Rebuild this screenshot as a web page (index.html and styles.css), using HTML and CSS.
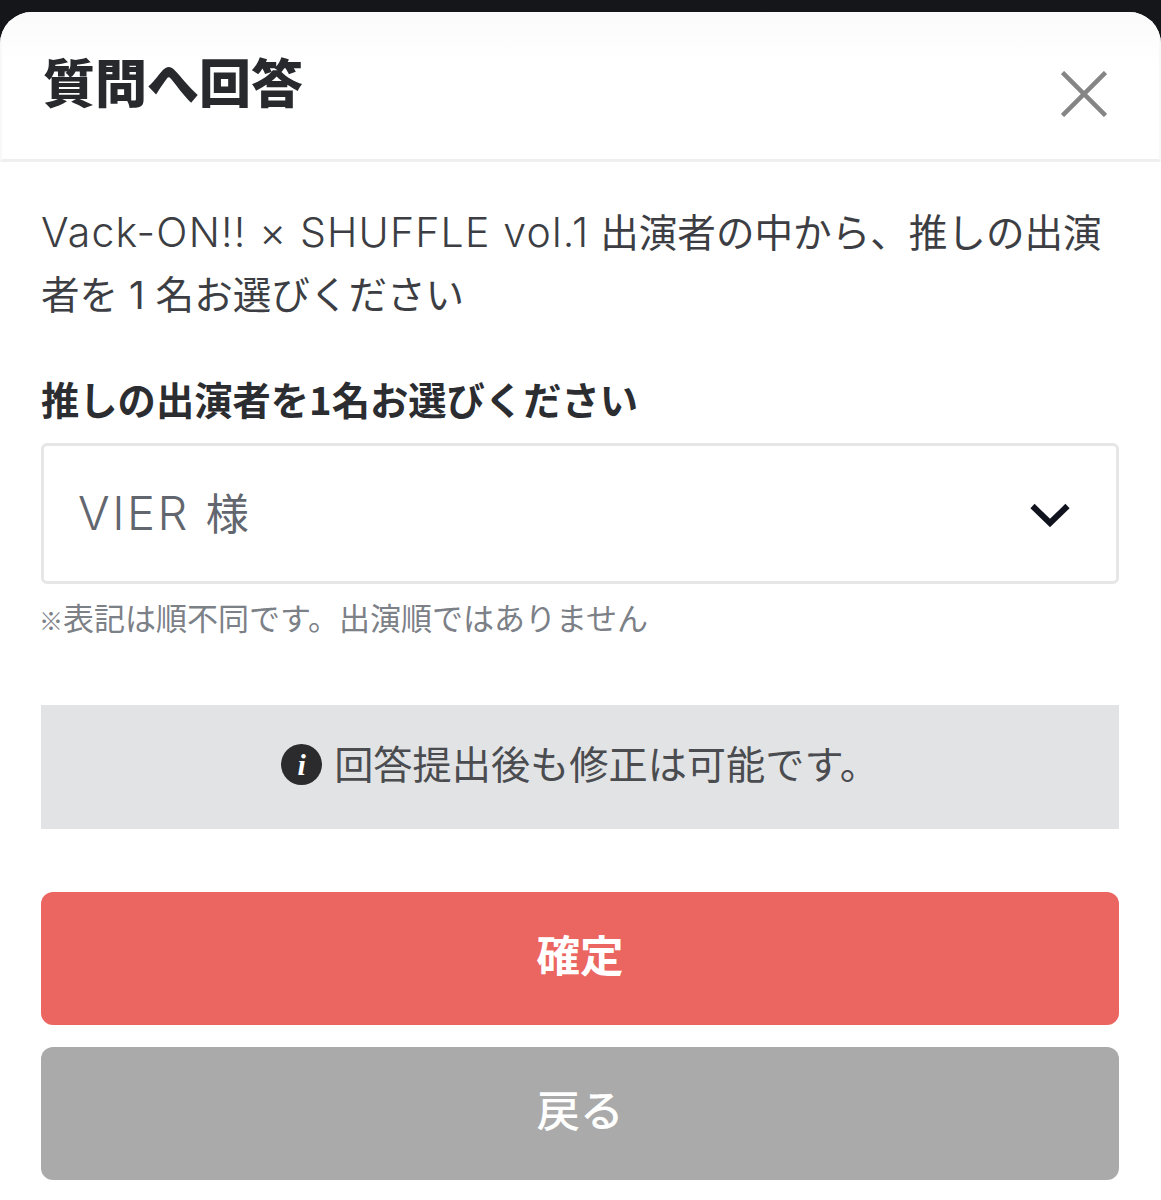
FILE: index.html
```html
<!DOCTYPE html>
<html lang="ja">
<head>
<meta charset="utf-8">
<title>質問へ回答</title>
<link rel="stylesheet" href="styles.css">
</head>
<body>
<div class="modal">
  <header class="modal-header">
    <h1 class="modal-title">質問へ回答</h1>
    <button class="close-btn" aria-label="閉じる">
      <svg class="close-icon" viewBox="0 0 46 46"><path d="M1.5 1.5L44.5 44.5M44.5 1.5L1.5 44.5"/></svg>
    </button>
  </header>
  <main class="modal-body">
    <p class="question"><span class="latin">Vack-ON!! × SHUFFLE vol.1</span> 出演者の中から、推しの出演者を 1 名お選びください</p>
    <div class="field-label">推しの出演者を1名お選びください</div>
    <div class="select">
      <span class="select-value"><span class="latin-lg">VIER</span> 様</span>
      <svg class="chevron" viewBox="0 0 40 24"><path d="M2.5 3L20 20L37.5 3"/></svg>
    </div>
    <div class="hint"><span class="hint-mark">※</span>表記は順不同です。出演順ではありません</div>
    <div class="notice">
      <span class="info-icon">i</span>
      <span class="notice-text">回答提出後も修正は可能です。</span>
    </div>
    <button class="btn btn-primary">確定</button>
    <button class="btn btn-secondary">戻る</button>
  </main>
</div>
</body>
</html>
```

FILE: styles.css
```css
* { box-sizing: border-box; }
html, body { margin: 0; padding: 0; }
body {
  width: 1161px;
  height: 1200px;
  overflow: hidden;
  background: #15161a;
  padding-top: 12px;
  font-family: Inter, "Noto Sans CJK JP", sans-serif;
  color: #2b2d31;
}
.modal {
  height: 1188px;
  background: #fff;
  border-radius: 32px 32px 0 0;
  overflow: hidden;
}
.modal-header {
  height: 150px;
  display: flex;
  justify-content: space-between;
  padding: 0 52px 0 45px;
  border-bottom: 3px solid #efefef;
  border-left: 2px solid #f8f8f8;
  border-right: 2px solid #f8f8f8;
  background: linear-gradient(#fafafa, #fff 50px);
}
.modal-title {
  margin: 36px 0 0 -4px;
  font-size: 52px;
  line-height: 66px;
  font-weight: 900;
  font-family: "Noto Sans CJK JP", sans-serif;
  color: #27292d;
}
.close-btn {
  margin: 59px 0 0;
  padding: 0;
  width: 46px;
  height: 46px;
  border: 0;
  background: none;
}
.close-icon { display: block; width: 46px; height: 46px; }
.close-icon path { fill: none; stroke: #858585; stroke-width: 4.5; }
.modal-body {
  padding: 40px 42px 0 41px;
  display: flex;
  flex-direction: column;
}
.question {
  margin: 0;
  font-size: 38.6px;
  line-height: 62px;
  font-weight: 400;
  color: #3c3e43;
}
.latin {
  font-size: 41px;
  font-weight: 300;
  letter-spacing: 1.2px;
  line-height: 1;
}
.field-label {
  margin-top: 48px;
  font-size: 38.3px;
  line-height: 50px;
  font-weight: 700;
  font-family: "Noto Sans CJK JP", sans-serif;
  color: #2b2d31;
}
.select {
  margin-top: 19px;
  height: 141px;
  display: flex;
  align-items: center;
  justify-content: space-between;
  padding: 0 46px 0 34px;
  border: 3px solid #e6e6e6;
  border-radius: 6px;
}
.select-value {
  font-size: 43px;
  font-weight: 400;
  line-height: 60px;
  color: #62666e;
}
.latin-lg {
  font-size: 47px;
  font-weight: 300;
  letter-spacing: 2.5px;
  margin-right: 4px;
  line-height: 1;
}
.chevron { display: block; width: 40px; height: 24px; margin-top: 2px; }
.chevron path { fill: none; stroke: #10131e; stroke-width: 6; }
.hint {
  margin-top: 14px;
  font-size: 31px;
  line-height: 42px;
  color: #7c8087;
}
.hint-mark {
  font-family: "Noto Sans CJK JP", sans-serif;
  font-size: 24px;
  margin-left: -2px;
}
.notice {
  margin-top: 64px;
  height: 124px;
  background: #e2e3e5;
  display: flex;
  align-items: center;
  justify-content: center;
  gap: 12px;
  padding-bottom: 5px;
}
.info-icon {
  width: 41px;
  height: 41px;
  border-radius: 50%;
  background: #2b2b2d;
  color: #fff;
  font-family: "Liberation Serif", serif;
  font-style: italic;
  font-weight: 700;
  font-size: 30px;
  line-height: 41px;
  text-align: center;
}
.notice-text {
  font-size: 39.2px;
  line-height: 50px;
  color: #4a4c50;
}
.btn {
  display: block;
  width: 100%;
  height: 133px;
  border: 0;
  border-radius: 12px;
  padding: 0 0 10px;
  color: #fff;
  font-family: "Noto Sans CJK JP", sans-serif;
  font-size: 43.5px;
  font-weight: 500;
}
.btn-primary { margin-top: 63px; background: #eb6661; font-weight: 700; }
.btn-secondary { margin-top: 22px; background: #aaaaaa; }
```
